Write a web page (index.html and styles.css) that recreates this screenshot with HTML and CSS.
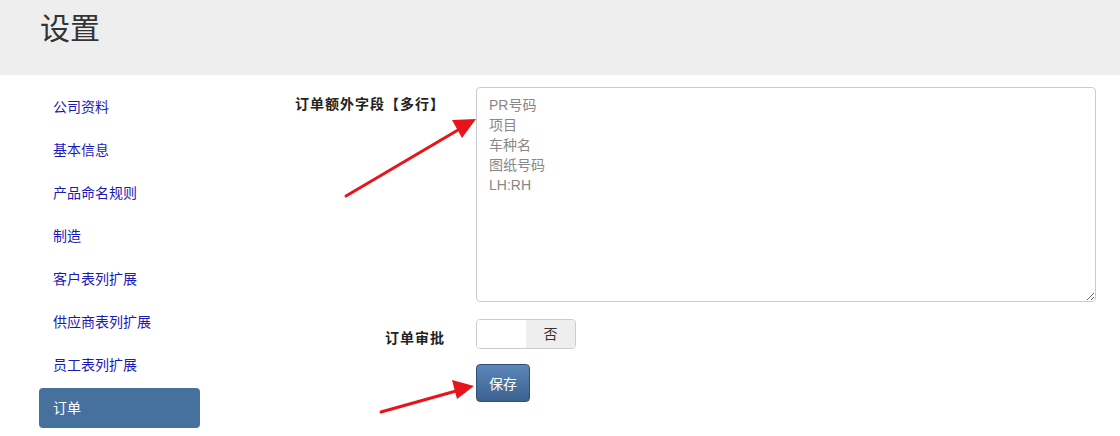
FILE: index.html
```html
<!DOCTYPE html>
<html lang="zh-CN">
<head>
    <meta charset="UTF-8">
    <meta name="viewport" content="width=device-width, initial-scale=1.0">
    <title>设置</title>
    <link rel="stylesheet" href="styles.css">
</head>
<body>
    <div class="page-header">
        <h1 class="page-title">设置</h1>
    </div>
    <div class="main">
        <ul class="side-nav">
            <li><a href="#">公司资料</a></li>
            <li><a href="#">基本信息</a></li>
            <li><a href="#">产品命名规则</a></li>
            <li><a href="#">制造</a></li>
            <li><a href="#">客户表列扩展</a></li>
            <li><a href="#">供应商表列扩展</a></li>
            <li><a href="#">员工表列扩展</a></li>
            <li class="active"><a href="#">订单</a></li>
        </ul>
        <form class="settings-form">
            <div class="form-row">
                <label class="form-label" for="extra-fields">订单额外字段【多行】</label>
                <textarea id="extra-fields" class="text-area">PR号码
项目
车种名
图纸号码
LH:RH</textarea>
            </div>
            <div class="form-row">
                <label class="form-label label-low">订单审批</label>
                <div class="switch">
                    <span class="switch-off"></span>
                    <span class="switch-label">否</span>
                </div>
            </div>
            <div class="form-row">
                <span class="form-label"></span>
                <button type="button" class="save-button">保存</button>
            </div>
        </form>
    </div>

    <!-- annotation arrows drawn over the screenshot -->
    <svg class="arrows" width="1120" height="436" viewBox="0 0 1120 436">
        <line x1="346" y1="196" x2="458" y2="130" stroke="#e8141c" stroke-width="3" stroke-linecap="round"/>
        <polygon points="476,119 452,120 462,138" fill="#e8141c"/>
        <line x1="381" y1="412" x2="456" y2="391" stroke="#e8141c" stroke-width="3" stroke-linecap="round"/>
        <polygon points="474,386 452,380 457,399" fill="#e8141c"/>
    </svg>
</body>
</html>
```

FILE: styles.css
```css
body {
    margin: 0;
    font-family: "Liberation Sans", "Noto Sans CJK SC", sans-serif;
    font-size: 14px;
    color: #333;
    background: #fff;
}
.page-header {
    height: 75px;
    background-color: #eeeeee;
    padding-left: 40px;
    box-sizing: border-box;
}
.page-title {
    margin: 0;
    padding-top: 11px;
    font-size: 30px;
    font-weight: normal;
    line-height: 36px;
    color: #333;
}
.main {
    display: flex;
    padding-top: 12px;
}
.side-nav {
    list-style: none;
    margin: 0 0 0 39px;
    padding: 0;
    width: 161px;
}
.side-nav li {
    height: 40px;
    margin-bottom: 3px;
    border-radius: 4px;
}
.side-nav a {
    display: block;
    padding-left: 14px;
    line-height: 40px;
    color: #1a1ab8;
    text-decoration: none;
}
.side-nav li.active {
    background-color: #46709e;
}
.side-nav li.active a {
    color: #fff;
}
.settings-form {
    flex: 1;
}
.form-row {
    display: flex;
    align-items: flex-start;
    margin-bottom: 17px;
}
.form-row:nth-child(2) {
    margin-bottom: 15px;
}
.form-label {
    width: 245px;
    flex-shrink: 0;
    margin-right: 31px;
    padding-top: 7px;
    line-height: 20px;
    text-align: right;
    font-weight: bold;
    letter-spacing: 1px;
    color: #222;
}
.label-low {
    padding-top: 9px;
}
.text-area {
    width: 620px;
    height: 215px;
    box-sizing: border-box;
    padding: 7px 12px;
    border: 1px solid #ccc;
    border-radius: 4px;
    font-family: "Liberation Sans", "Noto Sans CJK SC", sans-serif;
    font-size: 14px;
    line-height: 20px;
    color: #888;
    resize: both;
}
.switch {
    display: flex;
    width: 100px;
    height: 30px;
    box-sizing: border-box;
    border: 1px solid #ccc;
    border-radius: 4px;
    overflow: hidden;
}
.switch-off {
    width: 49px;
    background: #fff;
}
.switch-label {
    flex: 1;
    background: #eee;
    text-align: center;
    line-height: 28px;
    color: #333;
}
.save-button {
    width: 54px;
    height: 38px;
    padding: 0;
    border: 1px solid #2d4f78;
    border-radius: 4px;
    background: linear-gradient(#5d87b8, #3a6190);
    color: #fff;
    font-family: "Liberation Sans", "Noto Sans CJK SC", sans-serif;
    font-size: 14px;
    cursor: pointer;
}
.arrows {
    position: absolute;
    left: 0;
    top: 0;
    pointer-events: none;
}
```
